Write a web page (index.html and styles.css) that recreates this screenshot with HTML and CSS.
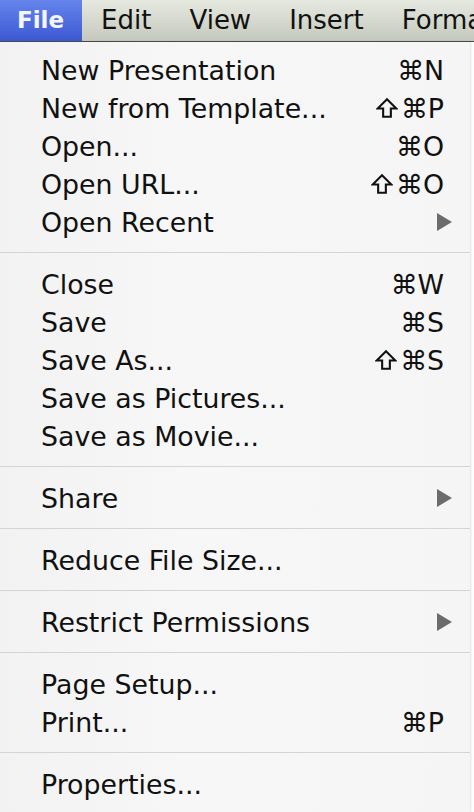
FILE: index.html
```html
<!DOCTYPE html>
<html>
<head>
<meta charset="utf-8">
<link rel="stylesheet" href="styles.css">
</head>
<body>
<div class="menubar">
  <div class="mb-item active">File</div>
  <div class="mb-item">Edit</div>
  <div class="mb-item">View</div>
  <div class="mb-item">Insert</div>
  <div class="mb-item">Format</div>
</div>
<div class="menu">
  <div class="row"><span class="label">New Presentation</span><span class="key">⌘N</span></div>
  <div class="row"><span class="label">New from Template...</span><span class="key"><svg class="shift" viewBox="0 0 20 20"><path d="M10 2 L18.5 10.5 L13.5 10.5 L13.5 18 L6.5 18 L6.5 10.5 L1.5 10.5 Z"/></svg>⌘P</span></div>
  <div class="row"><span class="label">Open...</span><span class="key">⌘O</span></div>
  <div class="row"><span class="label">Open URL...</span><span class="key"><svg class="shift" viewBox="0 0 20 20"><path d="M10 2 L18.5 10.5 L13.5 10.5 L13.5 18 L6.5 18 L6.5 10.5 L1.5 10.5 Z"/></svg>⌘O</span></div>
  <div class="row"><span class="label">Open Recent</span><span class="arrow"></span></div>
  <div class="sep"></div>
  <div class="row"><span class="label">Close</span><span class="key">⌘W</span></div>
  <div class="row"><span class="label">Save</span><span class="key">⌘S</span></div>
  <div class="row"><span class="label">Save As...</span><span class="key"><svg class="shift" viewBox="0 0 20 20"><path d="M10 2 L18.5 10.5 L13.5 10.5 L13.5 18 L6.5 18 L6.5 10.5 L1.5 10.5 Z"/></svg>⌘S</span></div>
  <div class="row"><span class="label">Save as Pictures...</span></div>
  <div class="row"><span class="label">Save as Movie...</span></div>
  <div class="sep"></div>
  <div class="row"><span class="label">Share</span><span class="arrow"></span></div>
  <div class="sep"></div>
  <div class="row"><span class="label">Reduce File Size...</span></div>
  <div class="sep"></div>
  <div class="row"><span class="label">Restrict Permissions</span><span class="arrow"></span></div>
  <div class="sep"></div>
  <div class="row"><span class="label">Page Setup...</span></div>
  <div class="row"><span class="label">Print...</span><span class="key">⌘P</span></div>
  <div class="sep"></div>
  <div class="row"><span class="label">Properties...</span></div>
</div>
</body>
</html>
```
FILE: styles.css
```css
html, body {
  margin: 0;
  padding: 0;
  background: #ffffff;
  overflow: hidden;
}
body {
  width: 474px;
  height: 812px;
  font-family: "DejaVu Sans", "Liberation Sans", sans-serif;
  color: #111;
}
.menubar {
  display: flex;
  height: 41px;
  background: linear-gradient(#e6e9e0, #c4c8bc);
  border-bottom: 1px solid #4a4a48;
  white-space: nowrap;
  overflow: hidden;
}
.mb-item {
  font-size: 26px;
  line-height: 41px;
  padding: 0 19px 0 19px;
  color: #111;
}
.mb-item.active {
  background: linear-gradient(#6585ec, #3c58d2);
  color: #f4f6ff;
  font-weight: bold;
  font-size: 23px;
  padding: 0 18px 0 17px;
}
.menu {
  width: 470px;
  background: linear-gradient(90deg, #f2f2f2, #f7f7f7 40%, #f5f5f5);
  padding-top: 9px;
  height: 762px;
  box-shadow: 1px 0 2px rgba(0,0,0,0.12);
}
.row {
  display: flex;
  align-items: center;
  height: 38px;
  padding: 0 26px 0 41px;
  font-size: 26.8px;
}
.label {
  flex: 1;
  white-space: nowrap;
}
.key {
  display: flex;
  align-items: center;
  white-space: nowrap;
}
.shift {
  width: 22px;
  height: 22px;
  margin-right: 3px;
  fill: none;
  stroke: #111;
  stroke-width: 1.9;
  stroke-linejoin: miter;
}
.arrow {
  width: 0;
  height: 0;
  border-top: 9px solid transparent;
  border-bottom: 9px solid transparent;
  border-left: 15px solid #6c6c6c;
  margin-right: -8px;
}
.sep {
  height: 1px;
  background: #d4d4d4;
  margin: 11px 0 12px 0;
}
```
